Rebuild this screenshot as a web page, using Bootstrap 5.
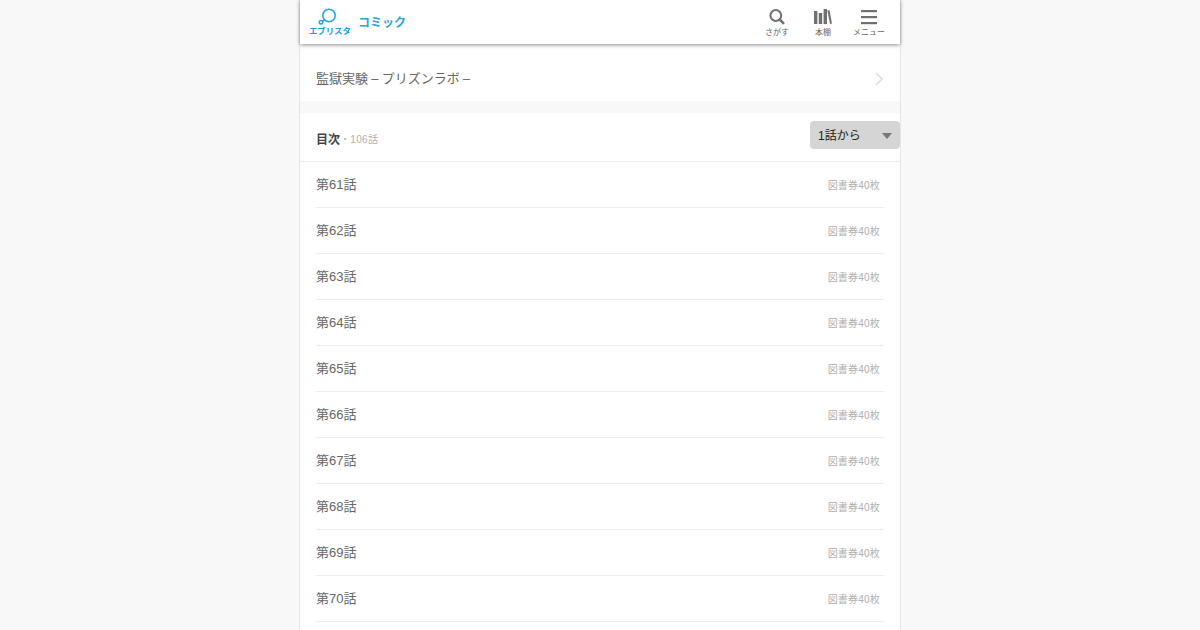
<!DOCTYPE html>
<html lang="ja">
  <head>
    <meta charset="utf-8">
    <meta name="viewport" content="width=device-width, initial-scale=1">
    <link href="https://cdn.jsdelivr.net/npm/bootstrap@5.3.3/dist/css/bootstrap.min.css" rel="stylesheet">
    <title>監獄実験 目次</title>
    <style>
      html, body { height: 100%; overflow: hidden; }
      body {
        background: #f8f8f8;
        font-family: "Liberation Sans", "Noto Sans CJK JP", sans-serif;
        color: #666;
      }
      .page-wrap {
        width: 602px;
        margin: 0 auto;
        min-height: 630px;
        background: #fff;
        border-left: 1px solid #e6e6e6;
        border-right: 1px solid #e6e6e6;
      }
      .top-bar {
        height: 44px;
        background: #fff;
        box-shadow: 0 1px 4px rgba(0,0,0,.45);
        position: relative;
      }
      .logo-box { width: 42px; margin-left: 8px; color: #1a9fd8; }
      .logo-box svg { display: block; margin-left: 10px; margin-top: 7px; }
      .logo-text { font-size: 8.4px; font-weight: 700; line-height: 10px; white-space: nowrap; margin-top: 1px; padding-left: 1px; }
      .service-name { font-size: 12px; font-weight: 700; color: #2fa3da; margin-left: 8px; padding-top: 2px; }
      .tool-group { margin-right: 8px; }
      .tool-btn { width: 46px; color: #666; }
      .tool-btn svg { display: block; height: 18px; margin-top: 8px; }
      .tool-btn span { font-size: 8px; line-height: 10px; margin-top: 2px; color: #666; white-space: nowrap; }
      .work-title { height: 45px; margin-top: 12px; font-size: 13px; padding: 1px 16px 0; word-spacing: -.4px; }
      .band { height: 12px; background: #f8f8f8; }
      .toc-head { height: 49px; border-bottom: 1px solid #eee; padding-left: 16px; }
      .toc-title { font-size: 12px; font-weight: 700; color: #444; padding-top: 18px; }
      .toc-count { font-size: 10px; color: #b0b0b0; padding-top: 19px; letter-spacing: .3px; }
      .sort-box {
        width: 90px; height: 28px; margin-top: 8px;
        background: #d5d5d5; border-radius: 4px;
        padding: 1px 8px 0; font-size: 12px; color: #222;
      }
      .sort-arrow { width: 0; height: 0; border-left: 5px solid transparent; border-right: 5px solid transparent; border-top: 6px solid #777; }
      .ep-list { padding: 0 16px; }
      .ep-row { height: 46px; border-bottom: 1px solid #eee; font-size: 13px; color: #666; padding: 1px 4px 0 0; }
      .ep-price { font-size: 10px; color: #b0b0b0; letter-spacing: .2px; }
    </style>
  </head>
  <body>
    <div class="page-wrap">
      <header class="top-bar d-flex">
        <div class="logo-box">
          <svg width="20" height="18" viewBox="0 0 20 18" fill="none" stroke="#2aa5e0" stroke-width="1.6">
            <circle cx="11" cy="8.5" r="6.2"/>
            <path d="M6.5 13 L4.5 14.2"/>
            <circle cx="3" cy="15.2" r="1.7"/>
          </svg>
          <div class="logo-text">エブリスタ</div>
        </div>
        <div class="service-name d-flex align-items-center">コミック</div>
        <div class="ms-auto d-flex tool-group">
          <div class="tool-btn d-flex flex-column align-items-center">
            <svg width="18" height="18" viewBox="0 0 18 18" fill="none" stroke="#707070" stroke-width="2">
              <circle cx="7.8" cy="7.5" r="5.4"/>
              <path d="M11.6 11.3 L16 15.8" stroke-width="2.6"/>
            </svg>
            <span>さがす</span>
          </div>
          <div class="tool-btn d-flex flex-column align-items-center">
            <svg width="18" height="18" viewBox="0 0 18 18" fill="#707070">
              <rect x="0" y="3" width="3.4" height="13"/>
              <rect x="4.8" y="5" width="3.4" height="11"/>
              <rect x="9.6" y="1" width="3.4" height="15"/>
              <path d="M13.4 2.5 L15.4 2 L18 15.4 L16 16 Z"/>
            </svg>
            <span>本棚</span>
          </div>
          <div class="tool-btn d-flex flex-column align-items-center">
            <svg width="16" height="18" viewBox="0 0 16 18" fill="#707070">
              <rect x="0" y="2" width="16" height="2.2"/>
              <rect x="0" y="8" width="16" height="2.2"/>
              <rect x="0" y="14" width="16" height="2.2"/>
            </svg>
            <span>メニュー</span>
          </div>
        </div>
      </header>

      <div class="work-title d-flex align-items-center justify-content-between">
        <span>監獄実験 – プリズンラボ –</span>
        <svg width="9" height="14" viewBox="0 0 9 14" fill="none" stroke="#ddd" stroke-width="1.5"><path d="M1 1 L7 7 L1 13"/></svg>
      </div>
      <div class="band"></div>

      <div class="toc-head d-flex">
        <div class="toc-title">目次</div>
        <div class="toc-count">・106話</div>
        <div class="sort-box ms-auto d-flex align-items-center justify-content-between">
          <span>1話から</span>
          <span class="sort-arrow"></span>
        </div>
      </div>

      <div class="ep-list" id="eps"></div>
    </div>
    <script src="https://cdn.jsdelivr.net/npm/bootstrap@5.3.3/dist/js/bootstrap.bundle.min.js"></script>
    <script>
      const list = document.getElementById('eps');
      for (let n = 61; n <= 70; n++) {
        const row = document.createElement('div');
        row.className = 'ep-row d-flex align-items-center justify-content-between';
        row.innerHTML = `<span>第${n}話</span><span class="ep-price">図書券40枚</span>`;
        list.appendChild(row);
      }
    </script>
  </body>
</html>
